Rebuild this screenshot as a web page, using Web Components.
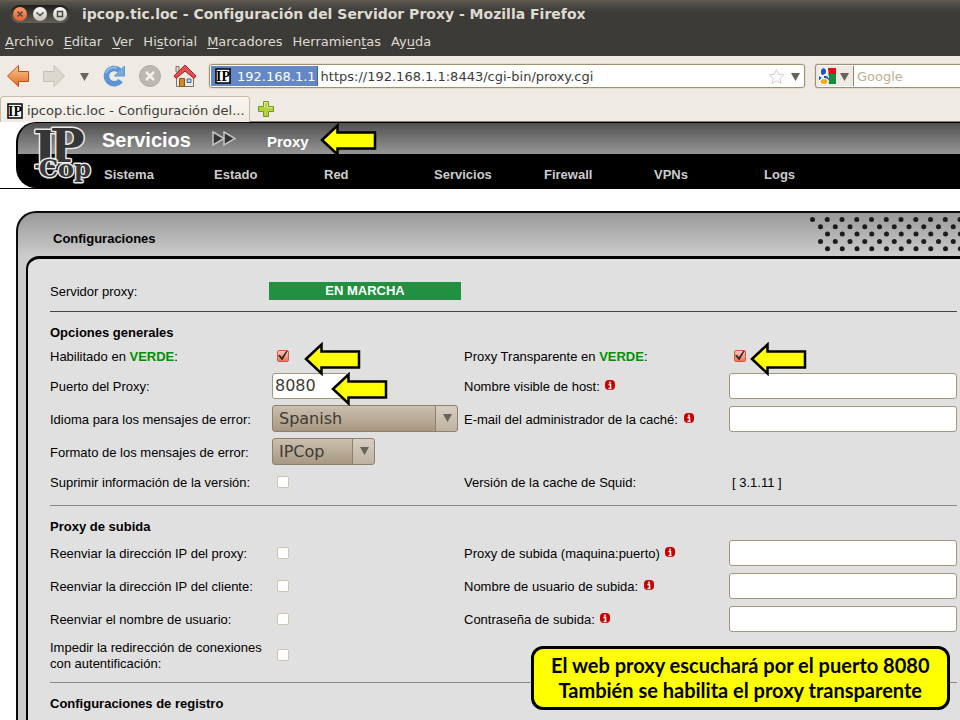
<!DOCTYPE html>
<html lang="es">
<head>
<meta charset="utf-8">
<title>ipcop.tic.loc - Configuración del Servidor Proxy</title>
<style>
  html, body { margin: 0; height: 100%; }
  body { background: #fff; font-family: "Liberation Sans", Arial, sans-serif; font-size: 13px; color: #000; overflow: hidden; }
</style>
</head>
<body>
<app-screen></app-screen>

<script>
const define = (name, html, setup) => {
  const template = document.createElement('template');
  template.innerHTML = html;
  customElements.define(name, class extends HTMLElement {
    constructor() {
      super();
      this.attachShadow({ mode: 'open' }).append(template.content.cloneNode(true));
    }
    connectedCallback() { if (setup) setup(this, this.shadowRoot); }
  });
};

define('title-bar', `
  <style>
    :host { display: flex; align-items: center; gap: 12px; height: 28px; padding-left: 10px;
      background: linear-gradient(#6b604d, #56544d 2px, #3d3b37 12px); color: #dfdbd2;
      font: bold 14px "DejaVu Sans", sans-serif; white-space: nowrap; }
    .buttons { display: flex; align-items: center; justify-content: space-between; box-sizing: border-box; width: 60px; height: 18px; padding: 0 3px;
      border-radius: 9px; background: linear-gradient(#1d1c1a, #63615a); }
    button { width: 14px; height: 14px; padding: 0; border: 0; border-radius: 50%; background: linear-gradient(#fff, #c5bfb4); }
    button.close { background: linear-gradient(#ff9c6c, #e45f2e); }
    svg { display: block; fill: none; stroke: #4a4640; stroke-width: 1.5; }
  </style>
  <div class="buttons">
    <button class="close" aria-label="Cerrar"><svg width="14" height="14"><path d="M4.500 4.500l5 5M9.500 4.500l-5 5"/></svg></button>
    <button aria-label="Minimizar"><svg width="14" height="14"><path d="M3.500 5.500L7 8.500l3.500-3"/></svg></button>
    <button aria-label="Maximizar"><svg width="14" height="14"><path d="M4.500 4.500h5v5h-5z"/></svg></button>
  </div>
  <slot></slot>`);

define('menu-bar', `
  <style>
    :host { display: flex; align-items: center; gap: 10px; height: 28px; padding-left: 5px; background: #3d3b37; }
    button { padding: 0; border: 0; background: none; color: #dfdbd2; font: 13px/26px "DejaVu Sans", sans-serif; }
    u { text-underline-offset: 2px; }
  </style>
  <button><u>A</u>rchivo</button><button><u>E</u>ditar</button><button><u>V</u>er</button>
  <button>Hi<u>s</u>torial</button><button><u>M</u>arcadores</button><button>Herramien<u>t</u>as</button><button>Ay<u>u</u>da</button>`);

define('ip-favicon', `
  <style>
    :host { display: block; flex: none; width: 16px; height: 16px; }
    svg { display: block; }
    text { font: bold 14px "Liberation Serif", serif; fill: #000; }
  </style>
  <svg width="16" height="16"><rect x="1" y="1" width="14" height="14" fill="#fff" stroke="#000" stroke-width="1.500"/><text x="8" y="13" text-anchor="middle">IP</text></svg>`);

define('nav-toolbar', `
  <style>
    :host { display: flex; align-items: center; height: 40px; padding-left: 6px; background: #efebe4; color: #3c3b37;
      font: 13px "DejaVu Sans", sans-serif; }
    svg { display: block; }
    button { padding: 0; border: 0; background: none; color: inherit; font: inherit; }
    .icons { display: flex; align-items: center; gap: 12px; width: 203px; }
    .icons .drop { margin: 0 1px 0 2px; }
    .icons .stop { margin-left: 1px; }
    .field { display: flex; align-items: center; box-sizing: border-box; height: 24px; border: 1px solid #a08f73; border-radius: 3px;
      background: #fff; box-shadow: 0 0 0 1px #e4ddd0; }
    .url { flex: 1; padding-right: 4px; }
    .host { display: flex; align-items: center; gap: 6px; height: 20px; margin-left: 1px; padding: 0 1px 0 4px;
      background: #6488c6; color: #fff; border-right: 1px solid #47648f; }
    input { flex: 1; min-width: 0; padding: 0; border: 0; outline: 0; background: none; color: #3c3b37; font: inherit; }
    .url input { margin-left: 3px; }
    .star { margin-right: 6px; }
    .search { width: 145px; margin-left: 10px; border-right: 0; border-radius: 3px 0 0 3px; }
    .engine { display: flex; align-items: center; gap: 4px; height: 20px; padding: 0 4px 0 3px; background: #efebe4; border-right: 1px solid #8f816b; }
    .search input { margin-left: 3px; }
    input::placeholder { color: #bfae93; opacity: 1; }
  </style>
  <div class="icons">
    <button aria-label="Atrás"><svg width="24" height="24"><defs><linearGradient id="a" x2="0" y2="1"><stop stop-color="#fbcb98"/><stop offset="1" stop-color="#e06a20"/></linearGradient></defs><path d="M1.500 12L12.500 1.500V7.500H22.500V17.500H12.500V22.500z" fill="url(#a)" stroke="#c5491b" stroke-linejoin="round"/></svg></button>
    <button aria-label="Adelante"><svg width="24" height="24"><path d="M22.500 12L12 1.500V7.500H1.500V17.500H12V22.500z" fill="#dcd8d0" stroke="#c4c0b8" stroke-linejoin="round"/></svg></button>
    <button class="drop" aria-label="Historial reciente"><svg width="9" height="9"><path d="M0 1H9L4.500 9z" fill="#66635d"/></svg></button>
    <button aria-label="Recargar"><svg width="24" height="24"><path d="M17.500 6.500A7.700 7.700 0 1 0 18.500 16.500" fill="none" stroke="#5a94d2" stroke-width="5.500"/><path d="M22.500 2V12H12.500L16 8.500z" fill="#78aadf" stroke="#5a94d2"/><path d="M4 9A8.500 8.500 0 0 1 15 4" fill="none" stroke="#8fbae8" stroke-width="2"/></svg></button>
    <button class="stop" aria-label="Detener"><svg width="22" height="22"><circle cx="11" cy="11" r="10.500" fill="#bdb8b1" stroke="#afaaa3"/><path d="M7 7l8 8M15 7l-8 8" stroke="#f4f1ec" stroke-width="2.500"/></svg></button>
    <button aria-label="Inicio"><svg width="24" height="24"><path d="M3.500 12L12 5l8.500 7V22.500h-17z" fill="#eeeae3" stroke="#76726b"/><path d="M3 2.500h3V8H3z" fill="#ddd" stroke="#77726b"/><path d="M12 1L1 12l2 2.500L12 7l9 7.500L23 12z" fill="#e25050" stroke="#ab2020" stroke-linejoin="round"/><path d="M6.500 14.500h5v8h-5z" fill="#ce8b22" stroke="#8a5712"/><path d="M14 15h4v3.500h-4z" fill="#b8d0e8" stroke="#456c91"/></svg></button>
  </div>
  <div class="field url">
    <button class="host"><ip-favicon></ip-favicon>192.168.1.1</button>
    <input aria-label="Dirección" value="https://192.168.1.1:8443/cgi-bin/proxy.cgi">
    <button class="star" aria-label="Marcar página"><svg width="17" height="17"><path d="M8.500 1.500l2.200 4.800 5 .5-3.800 3.600 1.200 5.100-4.600-2.700-4.600 2.700 1.200-5.100L1.300 6.800l5-.5z" fill="#fff" stroke="#d2d0cd"/></svg></button>
    <button aria-label="Desplegar"><svg width="9" height="9"><path d="M0 1H9L4.500 9z" fill="#66635d"/></svg></button>
  </div>
  <div class="field search">
    <button class="engine" aria-label="Buscador"><svg width="17" height="17"><path d="M9 0h8v6H9z" fill="#e60d16"/><path d="M9 6h8v10H9z" fill="#0a8f3c"/><path d="M0 6h4l6 10H0z" fill="#fff"/><path d="M0 8l3 2-2 2H0z" fill="#1559c4"/><ellipse cx="5" cy="4" rx="4.500" ry="4.500" fill="#fff"/><ellipse cx="4.500" cy="3.800" rx="2.600" ry="3.500" fill="#1559c4"/><path d="M4 7l5-3 1 6-3 3z" fill="#fff"/><path d="M5 8l3 0 2 3-2 2-3-2z" fill="#1559c4"/><ellipse cx="5" cy="13.500" rx="5" ry="3.500" fill="#fff"/><ellipse cx="5" cy="13.500" rx="3.500" ry="2.500" fill="#f2ac16"/></svg>
      <svg width="9" height="9"><path d="M0 1H9L4.500 9z" fill="#66635d"/></svg></button>
    <input aria-label="Buscar" placeholder="Google">
  </div>`);

define('tab-strip', `
  <style>
    :host { display: flex; align-items: flex-end; gap: 7px; height: 26px; background: #efebe4; box-shadow: inset 0 -1px #8d806b; }
    .tab { display: flex; align-items: center; gap: 4px; box-sizing: border-box; width: 250px; height: 26px; padding: 2px 0 0 6px;
      border: 1px solid #c9bba5; border-bottom: 0; border-radius: 4px 4px 0 0; background: linear-gradient(#f8f5f0, #efebe4);
      color: #3c3b37; font: 13px "DejaVu Sans", sans-serif; white-space: nowrap; }
    .add { align-self: center; padding: 0; border: 0; background: none; }
    svg { display: block; }
  </style>
  <button class="tab"><ip-favicon></ip-favicon><slot></slot></button>
  <button class="add" aria-label="Nueva pestaña"><svg width="18" height="18"><path d="M6.500 1.500h5v5h5v5h-5v5h-5v-5h-5v-5h5z" fill="#b5d03c" stroke="#6e9a1e"/><path d="M7.500 7.500V2.500h3v5h5" fill="none" stroke="#dcea94"/></svg></button>`);

define('site-header', `
  <style>
    :host { display: block; border-bottom: 1px solid #000; padding-left: 16px; }
    header { display: grid; grid-template-columns: 84px 1fr; height: 66px; box-sizing: border-box; border: solid #000; border-width: 1px 0 1px 2px;
      border-radius: 20px 0 0 20px; background: linear-gradient(#505050, #979797 31px, #000 31px); }
    .logo { padding-left: 14px; }
    svg { display: block; overflow: visible; }
    .logo text { font-family: "DejaVu Serif", serif; font-weight: bold; fill: #363636; stroke: #e8e8e8; stroke-width: 3px; paint-order: stroke; stroke-linejoin: round; }
    .crumbs { display: flex; align-items: center; height: 31px; color: #fff; font-weight: bold; }
    h1 { margin: 0; width: 110px; font-size: 20px; line-height: 30px; padding-top: 2px; }
    h2 { margin: 0 0 0 30px; font-size: 15px; padding-top: 5px; }
    nav { display: flex; height: 33px; align-items: center; padding: 4px 0 0 2px; }
    a { width: 110px; color: #ccc; font-weight: bold; text-decoration: none; }
  </style>
  <header>
    <div class="logo"><svg width="60" height="64" role="img" aria-label="IPCop">
      <text x="1" y="45" font-size="52">I</text><text x="18" y="39" font-size="46">P</text>
      <text x="7" y="54" font-size="24">Cop</text></svg></div>
    <div>
      <div class="crumbs"><h1>Servicios</h1><svg width="25" height="17"><path d="M1 2l11 6.500L1 15zM12 2l11 6.500L12 15z" fill="#333" stroke="#c4c4c4" stroke-width="1.500"/></svg><h2>Proxy</h2></div>
      <nav><a href="#sistema">Sistema</a><a href="#estado">Estado</a><a href="#red">Red</a><a href="#servicios">Servicios</a><a href="#firewall">Firewall</a><a href="#vpns">VPNs</a><a href="#logs">Logs</a></nav>
    </div>
  </header>`);

define('settings-panel', `
  <style>
    :host { display: flex; flex-direction: column; box-sizing: border-box; margin: 22px 0 0 16px; border: solid #0a0a0a; border-width: 2px 0 0 2px; border-radius: 20px 0 0 0;
      background: linear-gradient(#999, #ccc 43px); overflow: hidden; }
    .head { display: flex; justify-content: space-between; align-items: center; height: 43px; padding-left: 35px; }
    h2 { margin: 0; padding-top: 8px; font-size: 13px; }
    .body { flex: 1; margin-left: 8px; padding: 23px 3px 0 22px; border: solid #000; border-width: 3px 0 0 2px;
      border-radius: 13px 0 0 0; background: #e0e0e0; }
    svg { display: block; }
  </style>
  <div class="head"><h2>Configuraciones</h2><svg width="150" height="43" fill="#1c1c1c" aria-hidden="true"></svg></div>
  <div class="body"><slot></slot></div>`,
  (host, root) => {
    const svg = root.querySelector('svg');
    let dots = '';
    for (let row = 0; row < 5; row++) {
      const first = row === 0 ? 2.5 : row % 2 ? 10.5 : 17.5;
      for (let x = first; x < 152; x += 14.75) dots += `<circle cx="${x}" cy="${6.5 + row * 7.3}" r="2.500"/>`;
    }
    svg.innerHTML = dots;
  });

define('form-section', `
  <style>
    :host { display: block; border-top: 1px solid #888; margin-top: 10px; padding-top: 10px; }
    h3 { margin: 0; padding-top: 2px; font-size: 13px; line-height: 18px; }
  </style>
  <h3></h3><slot></slot>`,
  (host, root) => { root.querySelector('h3').textContent = host.getAttribute('heading'); });

define('form-row', `
  <style>
    :host { display: grid; grid-template-columns: minmax(0, 414fr) minmax(0, 493fr); align-items: center; min-height: 33px; }
    :host([size="compact"]) { min-height: 27px; }
    :host([size="tall"]) { min-height: 40px; }
    :host([size="status"]) { min-height: 18px; }
  </style>
  <slot></slot>`);

define('info-mark', `
  <style>:host { display: inline-block; margin-left: 2px; vertical-align: 1px; } svg { display: block; }</style>
  <svg width="10" height="10"><rect width="10" height="10" rx="4" fill="#c80000"/><path d="M5 1.500v2M3.500 4.500h2v3.500M3.500 8.500h3" stroke="#fff" stroke-width="1.500" fill="none"/></svg>`);

define('form-field', `
  <style>
    :host { display: grid; grid-template-columns: minmax(0, 219fr) minmax(0, 195fr); align-items: center; line-height: 16px; }
    :host([side="right"]) { grid-template-columns: minmax(0, 262fr) minmax(0, 231fr); }
    label { padding-top: 2px; }
    ::slotted(b) { color: #009000; }
    input, select { box-sizing: border-box; appearance: none; outline: 0; color: #3c3b37; font: 16px "DejaVu Sans", sans-serif; }
    input[type=text] { width: calc(100% - 3px); height: 26px; margin: 0 0 0 3px; padding: 0 3px; border: 1px solid #a4957c; border-radius: 3px; background: #fff; }
    input[type=text].short { width: 76px; padding: 0 2px; }
    input[type=checkbox] { display: block; width: 12px; height: 12px; margin: 0 0 0 8px; border: 1px solid #cfc4b3; border-radius: 2px; background: #fff; }
    input[type=checkbox]:checked { border-color: #d8553c; background: linear-gradient(#ffc8bc, #f4745b); }
    input[type=checkbox]:checked::after { content: ""; display: block; width: 10px; height: 10px; background: #2f2a28;
      clip-path: polygon(0 50%, 18% 42%, 38% 68%, 85% 0, 100% 0, 42% 100%); }
    .pick { position: relative; width: fit-content; margin-left: 3px; }
    .pick.wide { width: 186px; } .pick.narrow { width: 103px; }
    select { display: block; width: 100%; height: 27px; padding: 0 28px 0 6px; border: 1px solid #8f806b; border-radius: 3px;
      background: linear-gradient(90deg, #8f806b 1px, rgba(255,255,255,.25) 1px) right / 22px 100% no-repeat, linear-gradient(#cbbfae, #a89882); }
    .pick svg { position: absolute; right: 6px; top: 9px; pointer-events: none; }
    output { display: block; }
    .control { display: flow-root; }
    .control input[type=text] { display: block; }
    .status { width: 192px; background: #219040; color: #fff; font-weight: bold; line-height: 18px; text-align: center; }
    .value { padding: 2px 0 0 6px; }
  </style>
  <label for="control"><slot></slot></label>
  <div class="control"></div>`,
  (host, root) => {
    const value = host.getAttribute('value') || '';
    const size = host.getAttribute('size') || '';
    const controls = {
      text: `<input type="text" id="control" class="${size}" value="${value}">`,
      check: `<input type="checkbox" id="control" ${host.hasAttribute('checked') ? 'checked' : ''}>`,
      select: `<div class="pick ${size}"><select id="control"><option>${value}</option></select><svg width="9" height="9"><path d="M0 0H9L4.500 8z" fill="#66635d"/></svg></div>`,
      status: `<output id="control" class="status">${value}</output>`,
      value: `<output id="control" class="value">${value}</output>`
    };
    root.querySelector('.control').innerHTML = controls[host.getAttribute('type')];
  });

define('pointer-arrow', `
  <style>:host { display: block; } svg { display: block; }</style>
  <svg width="57" height="34"><path d="M2 17L17.500 2.500V9.500H55V25.500H17.500V31.500z" fill="#ff0" stroke="#000" stroke-width="2.500"/></svg>`);

define('note-box', `
  <style>
    :host { display: block; box-sizing: border-box; padding: 4px 17px; border: 3px solid #000; border-radius: 12px; background: #ff0; color: #000;
      font: bold 20px/25px Lato, sans-serif; text-align: center; white-space: nowrap; }
  </style>
  <slot></slot>`);

define('app-screen', `
  <style>
    :host { display: flex; flex-direction: column; position: relative; min-height: 100vh; overflow: hidden; }
    settings-panel { flex: 1; }
    form-section.first { border-color: #444; margin-top: 11px; }
    form-section.last { margin-top: 7px; }
    pointer-arrow, note-box { position: absolute; }
    .to-title { left: 320px; top: 123px; }
    .to-enabled { left: 304px; top: 342px; }
    .to-port { left: 331px; top: 372px; }
    .to-transparent { left: 750px; top: 342px; }
    note-box { left: 531px; top: 646px; }
  </style>
  <title-bar>ipcop.tic.loc - Configuración del Servidor Proxy - Mozilla Firefox</title-bar>
  <menu-bar></menu-bar>
  <nav-toolbar></nav-toolbar>
  <tab-strip>ipcop.tic.loc - Configuración del...</tab-strip>
  <site-header></site-header>
  <settings-panel>
    <form-row size="status"><form-field type="status" value="EN MARCHA">Servidor proxy:</form-field></form-row>
    <form-section class="first" heading="Opciones generales">
      <form-row size="compact">
        <form-field type="check" checked>Habilitado en <b>VERDE</b>:</form-field>
        <form-field side="right" type="check" checked>Proxy Transparente en <b>VERDE</b>:</form-field>
      </form-row>
      <form-row>
        <form-field type="text" size="short" value="8080">Puerto del Proxy:</form-field>
        <form-field side="right" type="text">Nombre visible de host: <info-mark></info-mark></form-field>
      </form-row>
      <form-row>
        <form-field type="select" size="wide" value="Spanish">Idioma para los mensajes de error:</form-field>
        <form-field side="right" type="text">E-mail del administrador de la caché: <info-mark></info-mark></form-field>
      </form-row>
      <form-row>
        <form-field type="select" size="narrow" value="IPCop">Formato de los mensajes de error:</form-field>
      </form-row>
      <form-row size="compact">
        <form-field type="check">Suprimir información de la versión:</form-field>
        <form-field side="right" type="value" value="[ 3.1.11 ]">Versión de la cache de Squid:</form-field>
      </form-row>
    </form-section>
    <form-section heading="Proxy de subida">
      <form-row>
        <form-field type="check">Reenviar la dirección IP del proxy:</form-field>
        <form-field side="right" type="text">Proxy de subida (maquina:puerto) <info-mark></info-mark></form-field>
      </form-row>
      <form-row>
        <form-field type="check">Reenviar la dirección IP del cliente:</form-field>
        <form-field side="right" type="text">Nombre de usuario de subida: <info-mark></info-mark></form-field>
      </form-row>
      <form-row>
        <form-field type="check">Reenviar el nombre de usuario:</form-field>
        <form-field side="right" type="text">Contraseña de subida: <info-mark></info-mark></form-field>
      </form-row>
      <form-row size="tall">
        <form-field type="check">Impedir la redirección de conexiones con autentificación:</form-field>
      </form-row>
    </form-section>
    <form-section class="last" heading="Configuraciones de registro"></form-section>
  </settings-panel>
  <pointer-arrow class="to-title"></pointer-arrow>
  <pointer-arrow class="to-enabled"></pointer-arrow>
  <pointer-arrow class="to-port"></pointer-arrow>
  <pointer-arrow class="to-transparent"></pointer-arrow>
  <note-box>El web proxy escuchará por el puerto 8080<br>También se habilita el proxy transparente</note-box>`);
</script>
</body>
</html>
